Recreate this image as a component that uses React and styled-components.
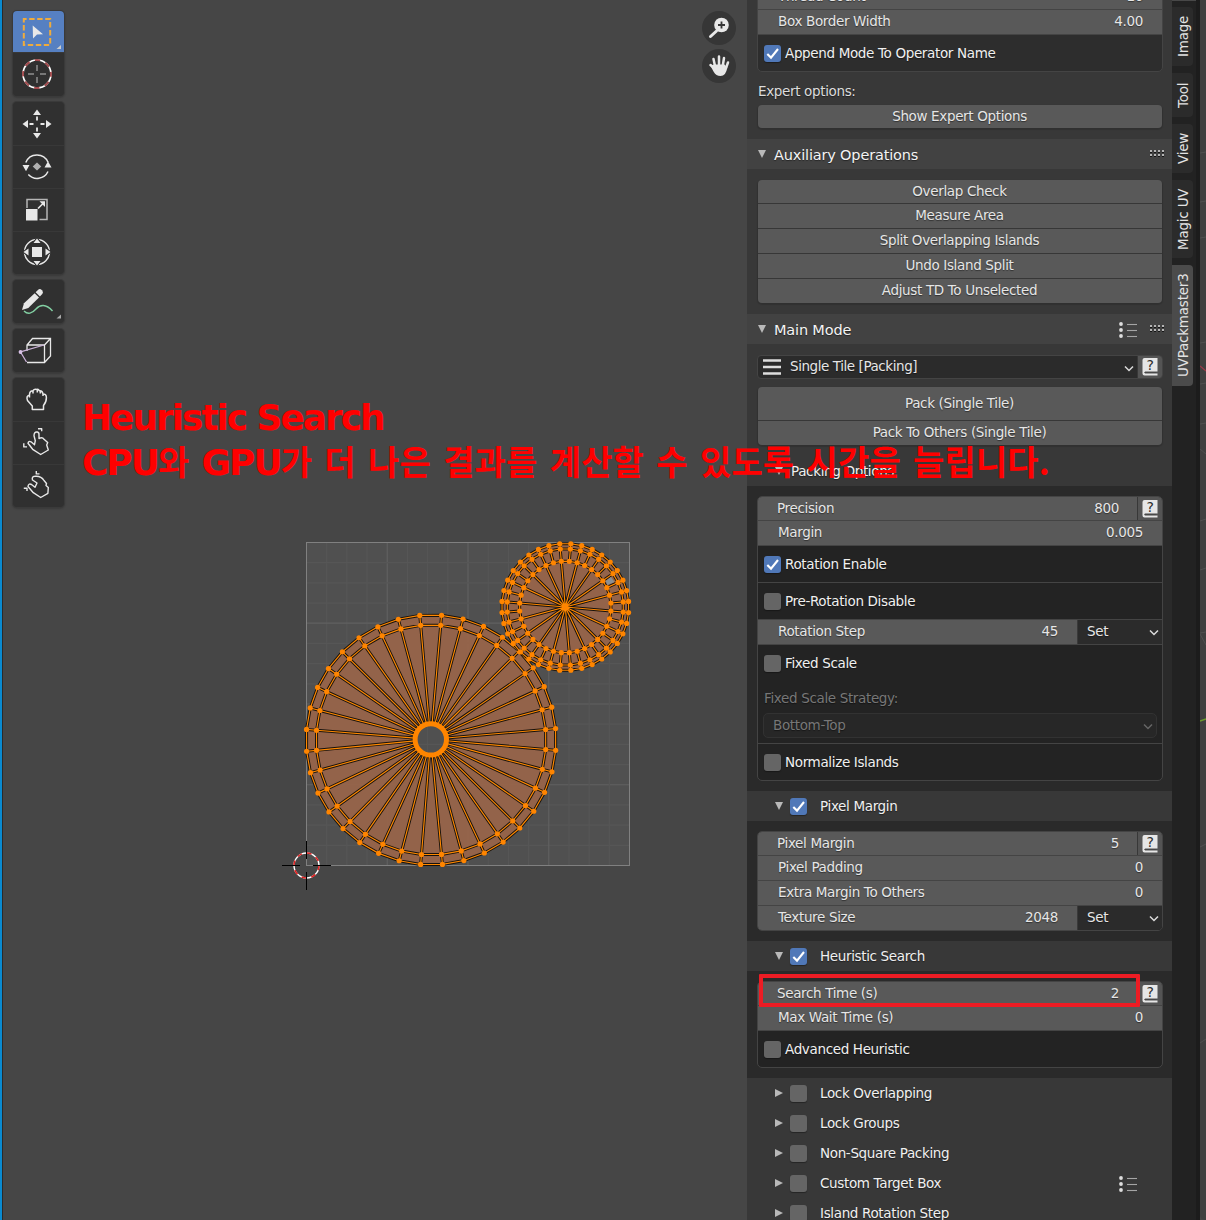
import React from 'react';
import styled, { createGlobalStyle } from 'styled-components';

const Global = createGlobalStyle`
  *, *::before, *::after { box-sizing: border-box; }
  html, body { margin: 0; background: #464646; overflow: hidden; }
  body { font-family: "DejaVu Sans", "Noto Sans CJK KR", sans-serif; }
  svg { display: block; flex: none; }
`;

/* ---------- frame ---------- */
const Frame = styled.div`
  position: relative;
  display: flex;
  width: 1206px;
  height: 1220px;
  overflow: hidden;
  background: #464646;
  color: #e6e6e6;
  font-size: 13.5px;
  letter-spacing: -0.35px;
  white-space: nowrap;
`;
const WindowEdge = styled.div`
  width: 3px;
  flex: none;
  background: #0a8ad0;
  border-right: 1px solid #2b2b2b;
`;
const Viewport = styled.main`
  flex: 1;
  display: flex;
  justify-content: space-between;
  align-items: flex-start;
  padding: 11px 11px 0 10px;
`;
const Canvas = styled.svg`
  position: absolute;
  left: 0;
  top: 0;
`;

/* ---------- toolbar ---------- */
const Toolbar = styled.nav`
  position: relative;
  display: flex;
  flex-direction: column;
  gap: 6px;
`;
const ToolGroup = styled.div`
  width: 51px;
  border-radius: 4px;
  overflow: hidden;
  background: #303030;
  box-shadow: 0 0 0 1px #3a3a3a, 0 1px 2px 1px rgba(0, 0, 0, 0.18);
`;
const ToolButton = styled.div`
  height: ${(p) => p.$h || 43}px;
  background: ${(p) => (p.$active ? '#5680c2' : 'transparent')};
  & + & { box-shadow: inset 0 1px 0 #383838; }
`;
const NavColumn = styled.div`
  position: relative;
  display: flex;
  flex-direction: column;
  gap: 4px;
`;
const NavButton = styled.div`
  width: 34px;
  height: 34px;
  border-radius: 50%;
  background: #363636;
`;

/* ---------- side panel ---------- */
const Sidebar = styled.aside`
  position: relative;
  width: 425px;
  height: 1220px;
  flex: none;
  overflow: hidden;
  background: #383838;
  text-shadow: 0 1px 1px rgba(0, 0, 0, 0.45);
`;
const Box = styled.section`
  margin: 0 9px 0 10px;
  border: 1px solid #444;
  border-radius: 5px;
  overflow: hidden;
  background: ${(p) => p.$bg || '#232323'};
  margin-top: ${(p) => p.$mt || 0}px;
`;
const Row = styled.div`
  display: flex;
  height: ${(p) => p.$h}px;
  border-bottom: ${(p) => (p.$last ? 'none' : '1px solid #444')};
`;
const Field = styled.div`
  flex: 1;
  display: flex;
  justify-content: space-between;
  align-items: center;
  padding: 0 ${(p) => p.$pr || 19}px 2px ${(p) => p.$pl || 20}px;
  background: #595959;
`;
const HelpCell = styled.div`
  width: 25px;
  display: flex;
  align-items: center;
  justify-content: center;
  background: #545454;
  border-left: 1px solid #383838;
`;
const SetMenu = styled.div`
  width: 85px;
  display: flex;
  align-items: center;
  justify-content: space-between;
  padding: 0 3px 2px 9px;
  background: #2b2b2b;
  border-left: 1px solid #3a3a3a;
`;
const CheckRow = styled.div`
  height: ${(p) => p.$h}px;
  display: flex;
  align-items: center;
  gap: 4px;
  padding-left: 6px;
  color: #f0f0f0;
  border-bottom: ${(p) => (p.$line ? '1px solid #444' : 'none')};
`;
const Tick = styled.span`
  display: block;
  width: 17px;
  height: 17px;
  flex: none;
  border-radius: 3px;
  background: ${(p) => (p.$on ? '#5078b8' : '#656565')};
  box-shadow: 0 1px 1px rgba(0, 0, 0, 0.35);
`;
const Caption = styled.div`
  height: ${(p) => p.$h}px;
  display: flex;
  align-items: center;
  padding: ${(p) => p.$pt}px 0 0 ${(p) => p.$pl}px;
  color: ${(p) => (p.$dim ? '#777' : '#dcdcdc')};
`;
const ButtonStack = styled.div`
  margin: ${(p) => p.$mt || 0}px 10px 0 11px;
  border-radius: 4px;
  overflow: hidden;
  background: #595959;
  box-shadow: 0 1px 1px 1px rgba(0, 0, 0, 0.13);
`;
const PushButton = styled.div`
  height: ${(p) => p.$h}px;
  display: flex;
  align-items: center;
  justify-content: center;
  padding: 0 1px 1px 0;
  & + & { border-top: 1px solid #373737; padding-bottom: 3px; }
`;
const Header = styled.header`
  height: 30px;
  margin-top: 11px;
  display: flex;
  align-items: center;
  padding: 0 7px 0 11px;
  background: #424242;
  color: #f4f4f4;
  font-size: 14.5px;
  letter-spacing: -0.17px;
`;
const HeaderTitle = styled.span`
  margin-left: 8px;
  padding-top: 2px;
`;
const HeaderIcon = styled.span`
  margin: 2px 11px 0 0;
`;
const Spacer = styled.span`flex: 1;`;
const SubHeader = styled.header`
  height: 30px;
  margin-top: ${(p) => p.$mt || 0}px;
  display: flex;
  align-items: center;
  padding: 0 34px 0 28px;
  color: #f0f0f0;
`;
const SubTitle = styled.span`
  margin-left: ${(p) => (p.$plain ? 8 : 13)}px;
`;
const SubTickSlot = styled.span`margin-left: 7px;`;
const SubIcon = styled.span`margin-top: 2px;`;
const SubPanel = styled.div`
  padding: 10px 0;
  background: #2a2a2a;
`;
const ModeRow = styled.div`
  height: 24px;
  display: flex;
  margin: 11px 9px 8px 10px;
  border: 1px solid #444;
  border-radius: 4px;
  overflow: hidden;
  background: #2b2b2b;
`;
const ModeSelect = styled.div`
  flex: 1;
  display: flex;
  align-items: center;
  gap: 9px;
  padding: 0 3px 1px 5px;
  letter-spacing: -0.43px;
`;
const ModeLabel = styled.span`padding-bottom: 2px;`;
const DimSelect = styled.div`
  height: 25px;
  margin: 0 5px;
  display: flex;
  align-items: center;
  justify-content: space-between;
  padding: 0 3px 2px 9px;
  border: 1px solid #323232;
  border-radius: 5px;
  background: #272727;
  color: #777;
`;
const StrategyBlock = styled.div`
  height: 99px;
  border-bottom: 1px solid #444;
`;

/* ---------- tab strip ---------- */
const TabStrip = styled.div`
  position: relative;
  width: 28px;
  flex: none;
  display: flex;
  flex-direction: column;
  gap: 7px;
  background: #222;
  border-right: 4px solid #1c1c1c;
`;
const Tab = styled.div`
  width: 21px;
  height: ${(p) => p.$h}px;
  display: flex;
  align-items: center;
  justify-content: center;
  writing-mode: vertical-rl;
  transform: rotate(180deg);
  border-radius: 4px 0 0 4px;
  letter-spacing: -0.22px;
  color: #e2e2e2;
  background: ${(p) => (p.$active ? '#4b4b4b' : '#2b2b2b')};
`;
const TabStub = styled.div`
  width: 24px;
  height: 0;
  border-top: 1px solid #484848;
  margin-bottom: -1px;
`;
const NextEditor = styled.div`
  position: relative;
  width: 6px;
  flex: none;
  background: #404040;
  border-bottom-left-radius: 5px;
`;

/* ---------- annotations ---------- */
const Note = styled.div`
  position: absolute;
  left: 82px;
  top: 395px;
  color: #ff0000;
  font-weight: 700;
  font-size: 36px;
  line-height: 45px;
  letter-spacing: -2.05px;
`;
const NoteLine = styled.div`height: 45px;`;
const Hangul = styled.span`
  font-family: "Noto Sans CJK KR", sans-serif;
  font-size: 34px;
  line-height: 1;
  letter-spacing: 0.15px;
  word-spacing: 4.4px;
`;
const Highlight = styled.div`
  position: absolute;
  left: 759px;
  top: 974px;
  width: 381px;
  height: 33px;
  border: 4px solid #ed1c24;
  border-radius: 1px;
`;

/* ---------- icons ---------- */
const Down = () => (
  <svg width="8" height="8"><path d="M0 0H8L4 8Z" fill="#b9b9b9" /></svg>
);
const Right = () => (
  <svg width="8" height="8"><path d="M0 0L8 4L0 8Z" fill="#b9b9b9" /></svg>
);
const Chevron = ({ color = '#dcdcdc' }) => (
  <svg width="10" height="10"><path d="M1 4.500L5 8.500L9 4.500" fill="none" stroke={color} strokeWidth="1.500" /></svg>
);
const ListIcon = () => (
  <svg width="20" height="18">
    {[3, 9, 15].map((y) => (
      <g key={y}>
        <circle cx="3" cy={y} r="1.9" fill="#dedede" />
        <path d={`M9 ${y + 0.5}H19`} stroke="#a5a5a5" strokeWidth="1.1" />
      </g>
    ))}
  </svg>
);
const Grip = () => (
  <svg width="16" height="8">
    {[0, 4, 8, 12].map((x) => (
      <g key={x} fill="#b5b5b5">
        <rect x={x + 1} y="0" width="2" height="2" />
        <rect x={x + 1} y="4" width="2" height="2" />
        <rect x={x + 1} y="2" width="2" height="1" fill="#151515" />
        <rect x={x + 1} y="6" width="2" height="1" fill="#151515" />
      </g>
    ))}
  </svg>
);
const Glyph = styled.text`
  font-size: 14px;
  letter-spacing: 0;
  text-shadow: none;
  fill: #2c2c2c;
`;
const Book = () => (
  <svg width="16" height="18">
    <path d="M2.500 0H15.500V13.500H3Q2 14.500 3 15.500H15.500V17.500H2.500Q.500 17.500 .500 15.500V2Q.500 0 2.500 0Z" fill="#e6e6e6" />
    <path d="M2.500 14.500H14.500" stroke="#484848" strokeWidth="1.200" />
    <Glyph x="8.300" y="11.600" textAnchor="middle">?</Glyph>
  </svg>
);
const Menu = () => (
  <svg width="18" height="16"><path d="M0 1.500H18M0 8H18M0 14.500H18" stroke="#dedede" strokeWidth="2.300" /></svg>
);
const Check = ({ on }) => (
  <Tick $on={on}>
    {on && <svg width="17" height="17"><path d="M3.300 9L7 12.600L14 4" fill="none" stroke="#fff" strokeWidth="2.100" /></svg>}
  </Tick>
);

const W = '#e8e8e8';
const ICONS = {
  select: (
    <g>
      <rect x="10.8" y="8" width="26.4" height="26" fill="none" stroke="#efab3c" strokeWidth="2" strokeDasharray="5.4 2.6" strokeDashoffset="2.6" />
      <path d="M19.7 14.5L30 23.3L24 23.6L20 27.6Z" fill={W} />
      <path d="M48 34V38H43.5Z" fill="#ccc" />
    </g>
  ),
  cursor: (
    <g fill="none">
      <circle cx="24" cy="22" r="14" stroke="#fff" strokeWidth="1.700" />
      <circle cx="24" cy="22" r="14" stroke="#a34a4d" strokeWidth="1.900" strokeDasharray="5.500 5.500" strokeDashoffset="2.700" />
      <path d="M24 13V19M24 25V31M15 22H21M27 22H33" stroke="#8e8e8e" strokeWidth="1.500" />
    </g>
  ),
  move: (
    <g>
      <path d="M24 7.500L28 13H20ZM24 36.500L20 31H28ZM9.500 22L15 18V26ZM38.500 22L33 18V26Z" fill={W} />
      <path d="M24 14.500V18.500M24 25.500V29.500M16.500 22H20.500M27.500 22H31.500" stroke={W} strokeWidth="1.800" />
    </g>
  ),
  rotate: (
    <g>
      <path d="M12.800 17.500A12 12 0 0 1 35 17.200M35 26.500A12 12 0 0 1 15.300 29.500" fill="none" stroke={W} strokeWidth="1.500" />
      <path d="M9.500 20H16.500L13 26.300ZM31.500 22.500H38.500L35 16.300Z" fill={W} />
      <path d="M24 17.500L28.300 21.500L24 25.500L19.700 21.500Z" fill="#b0b0b0" />
    </g>
  ),
  scale: (
    <g>
      <path d="M14 20V11.500H34V31.500H26.500" fill="none" stroke="#b5b5b5" strokeWidth="1.500" />
      <rect x="13" y="21" width="11.500" height="11.500" fill={W} />
      <path d="M25 20.500L30 15.500" stroke={W} strokeWidth="1.600" />
      <path d="M32 13.300V19L26.500 13.300Z" fill={W} />
    </g>
  ),
  transform: (
    <g>
      <circle cx="24" cy="21" r="12.500" fill="none" stroke={W} strokeWidth="1.400" />
      <path d="M24 6L29.500 12.500H18.500ZM24 36L18.500 29.500H29.500ZM9 21L16 15.500V26.500ZM39 21L32 15.500V26.500Z" fill="#303030" />
      <path d="M24 7.500L27.500 12H20.500ZM24 34.500L20.500 30H27.500ZM10.500 21L15.500 17.500V24.500ZM37.500 21L32.500 17.500V24.500Z" fill={W} />
      <rect x="19" y="16" width="10" height="10" fill={W} />
    </g>
  ),
  annotate: (
    <g>
      <path d="M9 30L11 23.300L21.700 13.200L26 17.500L15.300 28Z" fill={W} />
      <path d="M22.600 12.300L25.200 9.700Q27 8.300 29 10.300Q30.800 12.300 29.300 14L26.900 16.600Z" fill={W} />
      <path d="M11 31C15 35 19 33.500 23 29C27 24.500 33 23.500 39.500 31" fill="none" stroke="#82cfa2" strokeWidth="1.400" />
      <path d="M48 34.500V38.500H43.500Z" fill="#aaa" />
    </g>
  ),
  cube: (
    <g fill="none" stroke={W} strokeWidth="1.300">
      <path d="M14 22V16L19.500 9.500H37.500V27L31.500 33.500H14M14 16H31.500V33.500M31.500 16L37.500 9.500" />
      <path d="M31 16L7.500 23L13.500 33" stroke="#c9b0d6" />
      <circle cx="7.500" cy="23" r="1.900" fill="#d8c1e6" stroke="none" />
    </g>
  ),
  grab: (
    <path d="M19.300 31.500V28L14.500 22.500Q12.800 18 16.500 17Q16.500 12.500 20 12.700Q21.300 10.500 24 11.500Q25.500 11 26.300 12.700Q29.500 12.300 30 16Q33.300 15.800 33.400 19.500Q33.500 24 30.500 27.500V31.500ZM16.500 17V19.500M20 12.700V15.500M24.300 11.500V14.500M27.300 12.700V15.500M30 16V18" fill="none" stroke={W} strokeWidth="1.500" strokeLinejoin="round" />
  ),
  relax: (
    <g fill="none" stroke={W} strokeWidth="1.400" strokeLinejoin="round">
      <path d="M27.700 33.500L19.700 28.300L15 22.300Q15.500 19.500 18 20.800L21.500 23.700L22.300 19.700L21 14.700Q21 10.500 24.300 11Q26.300 11.500 26 14V17.500Q29.500 15.800 31 18.300L34.700 21.500L33.700 24L35.300 29Z" />
      <path d="M25 7.700H28.700V10.300M10.800 22.300V25.900H14" />
    </g>
  ),
  pinch: (
    <g fill="none" stroke={W} strokeWidth="1.400" strokeLinejoin="round">
      <path d="M27.700 33.500L20.300 28.700L15 22.500Q15.500 19 18.500 20.500L22 23.300L24 19L19.500 16Q18.500 12.500 21.700 12.300Q28 11.500 31 16.500L33.500 19.500L33 21.500L35.300 23.500L34.900 29.300Z" />
      <path d="M23.300 7V9.900H26.500M10.800 24.300H14V27" />
    </g>
  ),
};
const Tool = ({ icon, h, active }) => (
  <ToolButton $h={h} $active={active}>
    <svg width="51" height={h || 43}>{ICONS[icon]}</svg>
  </ToolButton>
);

/* ---------- UV editor drawing ---------- */
const polar = (cx, cy, r, deg) => {
  const a = (deg * Math.PI) / 180;
  return [cx + r * Math.sin(a), cy - r * Math.cos(a)];
};
const fmt = (pt) => `${pt[0].toFixed(2)} ${pt[1].toFixed(2)}`;
const ringPoints = (cx, cy, r, offset) =>
  Array.from({ length: 36 }, (_, i) => polar(cx, cy, r, offset + i * 10));
const loop = (pts) => `M${pts.map(fmt).join('L')}Z`;
const spokes = (a, b, step = 1) =>
  a.map((pt, i) => (i % step === 0 ? `M${fmt(pt)}L${fmt(b[i])}` : '')).join('');

const Mesh = ({ fill, edges, dots }) => (
  <g>
    <path d={fill} fill="#9a6549" fillOpacity="0.9" fillRule="evenodd" />
    <path d={edges} fill="none" stroke="#17120c" strokeWidth="3" />
    <path d={edges} fill="none" stroke="#ff8800" strokeWidth="1.150" />
    {dots.map((pt, i) => <circle key={i} cx={pt[0]} cy={pt[1]} r="2.600" fill="#ff8500" />)}
  </g>
);

const UvDrawing = () => {
  const bo = ringPoints(431.1, 739.9, 125, -5.2);
  const bi = ringPoints(431.1, 739.9, 115, -5.2);
  const bh = ringPoints(430.8, 739.4, 15.7, -5.2);
  const so = ringPoints(565.3, 607, 63.5, -5);
  const sm = ringPoints(565.3, 607, 58.2, -5);
  const si = ringPoints(565.3, 607, 45.8, -5);
  const c = si.map(() => [565.3, 607]);
  const lines = Array.from({ length: 15 }, (_, i) => i + 1);
  return (
    <Canvas width="747" height="1220">
      <rect x="306.500" y="542.500" width="323" height="323" fill="#505050" />
      {lines.map((i) => {
        const d = i * 20.19;
        return (
          <path key={i} d={`M${306.5 + d} 543V865M307 ${865.5 - d}H629`} stroke={i % 4 ? '#565656' : '#606060'} strokeWidth="1.200" />
        );
      })}
      <rect x="306.500" y="542.500" width="323" height="323" fill="none" stroke="#808080" />
      <Mesh fill={loop(bo) + loop(bh)} edges={loop(bo) + loop(bi) + spokes(bo, bi) + spokes(bi, bh)} dots={[...bo, ...bi]} />
      <circle cx="430.800" cy="739.400" r="15.700" fill="none" stroke="#ff8500" strokeWidth="5" />
      <Mesh fill={loop(so)} edges={loop(so) + loop(sm) + loop(si) + spokes(so, sm) + spokes(sm, si) + spokes(si, c, 2)} dots={[...so, ...sm, ...si, [565.3, 607]]} />
      <path d="M605.500 581L611 577L614.500 582L607.500 585Z" fill="#8b9093" />
      <g fill="none">
        <circle cx="306.500" cy="865.500" r="12.500" stroke="#fff" strokeWidth="1.400" />
        <circle cx="306.500" cy="865.500" r="12.500" stroke="#e02020" strokeWidth="1.500" strokeDasharray="4.900 4.900" />
        <path d="M282 865.500H300M313 865.500H331M306.500 841V859M306.500 872V890" stroke="#000" />
      </g>
    </Canvas>
  );
};

const NumberRow = ({ h, label, value, help, set, last }) => (
  <Row $h={h} $last={last}>
    <Field $pl={help ? 19 : 20} $pr={help ? 18 : 19}><span>{label}</span><span>{value}</span></Field>
    {help && <HelpCell><Book /></HelpCell>}
    {set && <SetMenu>Set<Chevron /></SetMenu>}
  </Row>
);
const CheckItem = ({ h, label, on, line }) => (
  <CheckRow $h={h} $line={line}><Check on={on} />{label}</CheckRow>
);
const OptionHeader = ({ label, on, open, list }) => (
  <SubHeader>
    {open ? <Down /> : <Right />}
    <SubTickSlot><Check on={on} /></SubTickSlot>
    <SubTitle>{label}</SubTitle>
    {list && <><Spacer /><SubIcon><ListIcon /></SubIcon></>}
  </SubHeader>
);

export default function App() {
  return (
    <>
      <Global />
      <Frame>
        <WindowEdge />
        <Viewport>
          <UvDrawing />
          <Toolbar>
            <ToolGroup><Tool icon="select" h={41} active /><Tool icon="cursor" h={44} /></ToolGroup>
            <ToolGroup><Tool icon="move" /><Tool icon="rotate" /><Tool icon="scale" /><Tool icon="transform" /></ToolGroup>
            <ToolGroup><Tool icon="annotate" /></ToolGroup>
            <ToolGroup><Tool icon="cube" /></ToolGroup>
            <ToolGroup><Tool icon="grab" /><Tool icon="relax" /><Tool icon="pinch" /></ToolGroup>
          </Toolbar>
          <NavColumn>
            <NavButton>
              <svg width="34" height="34">
                <circle cx="19.500" cy="14" r="7.300" fill={W} />
                <path d="M14.500 20L8.500 25.500" stroke={W} strokeWidth="3" strokeLinecap="round" />
                <path d="M19.500 10.500V17.500M16 14H23" stroke="#363636" strokeWidth="1.800" />
              </svg>
            </NavButton>
            <NavButton>
              <svg width="34" height="34">
                <path d="M13 17L11.500 10M17 16V7.500M20.800 16.500L22 9M24 19L26 13.500M13.500 20L8.500 16" stroke={W} strokeWidth="2.500" strokeLinecap="round" />
                <path d="M11.800 15.500H22.500L25.300 18.500Q24 27 18.500 27Q14 27 11.800 23L8.500 17Z" fill={W} />
              </svg>
            </NavButton>
          </NavColumn>
        </Viewport>

        <Sidebar>
          <Box $bg="#2d2d2d" $mt={-16}>
            <NumberRow h={25} label="Thread Count" value="16" />
            <NumberRow h={25} label="Box Border Width" value="4.00" />
            <CheckItem h={36} label="Append Mode To Operator Name" on />
          </Box>
          <Caption $h={33} $pl={11} $pt={5}>Expert options:</Caption>
          <ButtonStack><PushButton $h={23}>Show Expert Options</PushButton></ButtonStack>

          <Header><Down /><HeaderTitle>Auxiliary Operations</HeaderTitle><Spacer /><Grip /></Header>
          <ButtonStack $mt={11}>
            <PushButton $h={23}>Overlap Check</PushButton>
            <PushButton $h={25}>Measure Area</PushButton>
            <PushButton $h={25}>Split Overlapping Islands</PushButton>
            <PushButton $h={25}>Undo Island Split</PushButton>
            <PushButton $h={25}>Adjust TD To Unselected</PushButton>
          </ButtonStack>

          <Header>
            <Down /><HeaderTitle>Main Mode</HeaderTitle><Spacer />
            <HeaderIcon><ListIcon /></HeaderIcon><Grip />
          </Header>
          <ModeRow>
            <ModeSelect><Menu /><ModeLabel>Single Tile [Packing]</ModeLabel><Spacer /><Chevron /></ModeSelect>
            <HelpCell><Book /></HelpCell>
          </ModeRow>
          <ButtonStack>
            <PushButton $h={33}>Pack (Single Tile)</PushButton>
            <PushButton $h={25}>Pack To Others (Single Tile)</PushButton>
          </ButtonStack>

          <SubHeader $mt={11}><Down /><SubTitle $plain>Packing Options</SubTitle></SubHeader>
          <SubPanel>
            <Box>
              <NumberRow h={24} label="Precision" value="800" help />
              <NumberRow h={25} label="Margin" value="0.005" />
              <CheckItem h={37} label="Rotation Enable" on line />
              <CheckItem h={37} label="Pre-Rotation Disable" line />
              <NumberRow h={25} label="Rotation Step" value="45" set />
              <StrategyBlock>
                <CheckItem h={36} label="Fixed Scale" />
                <Caption $h={32} $pl={6} $pt={1} $dim>Fixed Scale Strategy:</Caption>
                <DimSelect>Bottom-Top<Chevron color="#666" /></DimSelect>
              </StrategyBlock>
              <CheckItem h={36} label="Normalize Islands" />
            </Box>
          </SubPanel>

          <OptionHeader label="Pixel Margin" on open />
          <SubPanel>
            <Box>
              <NumberRow h={24} label="Pixel Margin" value="5" help />
              <NumberRow h={25} label="Pixel Padding" value="0" />
              <NumberRow h={25} label="Extra Margin To Others" value="0" />
              <NumberRow h={24} label="Texture Size" value="2048" set last />
            </Box>
          </SubPanel>

          <OptionHeader label="Heuristic Search" on open />
          <SubPanel>
            <Box>
              <NumberRow h={24} label="Search Time (s)" value="2" help />
              <NumberRow h={25} label="Max Wait Time (s)" value="0" />
              <CheckItem h={36} label="Advanced Heuristic" />
            </Box>
          </SubPanel>

          <OptionHeader label="Lock Overlapping" />
          <OptionHeader label="Lock Groups" />
          <OptionHeader label="Non-Square Packing" />
          <OptionHeader label="Custom Target Box" list />
          <OptionHeader label="Island Rotation Step" />
        </Sidebar>

        <TabStrip>
          <TabStub />
          <Tab $h={59}>Image</Tab>
          <Tab $h={44}>Tool</Tab>
          <Tab $h={49}>View</Tab>
          <Tab $h={78}>Magic UV</Tab>
          <Tab $h={121} $active>UVPackmaster3</Tab>
        </TabStrip>
        <NextEditor>
          <svg width="6" height="1220">
            <path d="M0 366L6 371" stroke="#9a3a48" strokeWidth="1.300" />
            <path d="M0 721L6 719" stroke="#6b9a2c" strokeWidth="1.500" />
            <path d="M0 153L6 152M0 202L6 201M0 238L6 237M0 343L6 342M0 384L6 383M0 424L6 423M0 449L6 454M0 521L6 519M0 570L6 568M0 633L6 632M0 634L6 645M0 847L6 844M0 1043L6 1039" stroke="#505050" />
          </svg>
        </NextEditor>

        <Note>
          <NoteLine>Heuristic Search</NoteLine>
          <NoteLine>
            CPU<Hangul>와 </Hangul>GPU<Hangul>가 더 나은 결과를 계산할 수 있도록 시간을 늘립니다.</Hangul>
          </NoteLine>
        </Note>
        <Highlight />
      </Frame>
    </>
  );
}
